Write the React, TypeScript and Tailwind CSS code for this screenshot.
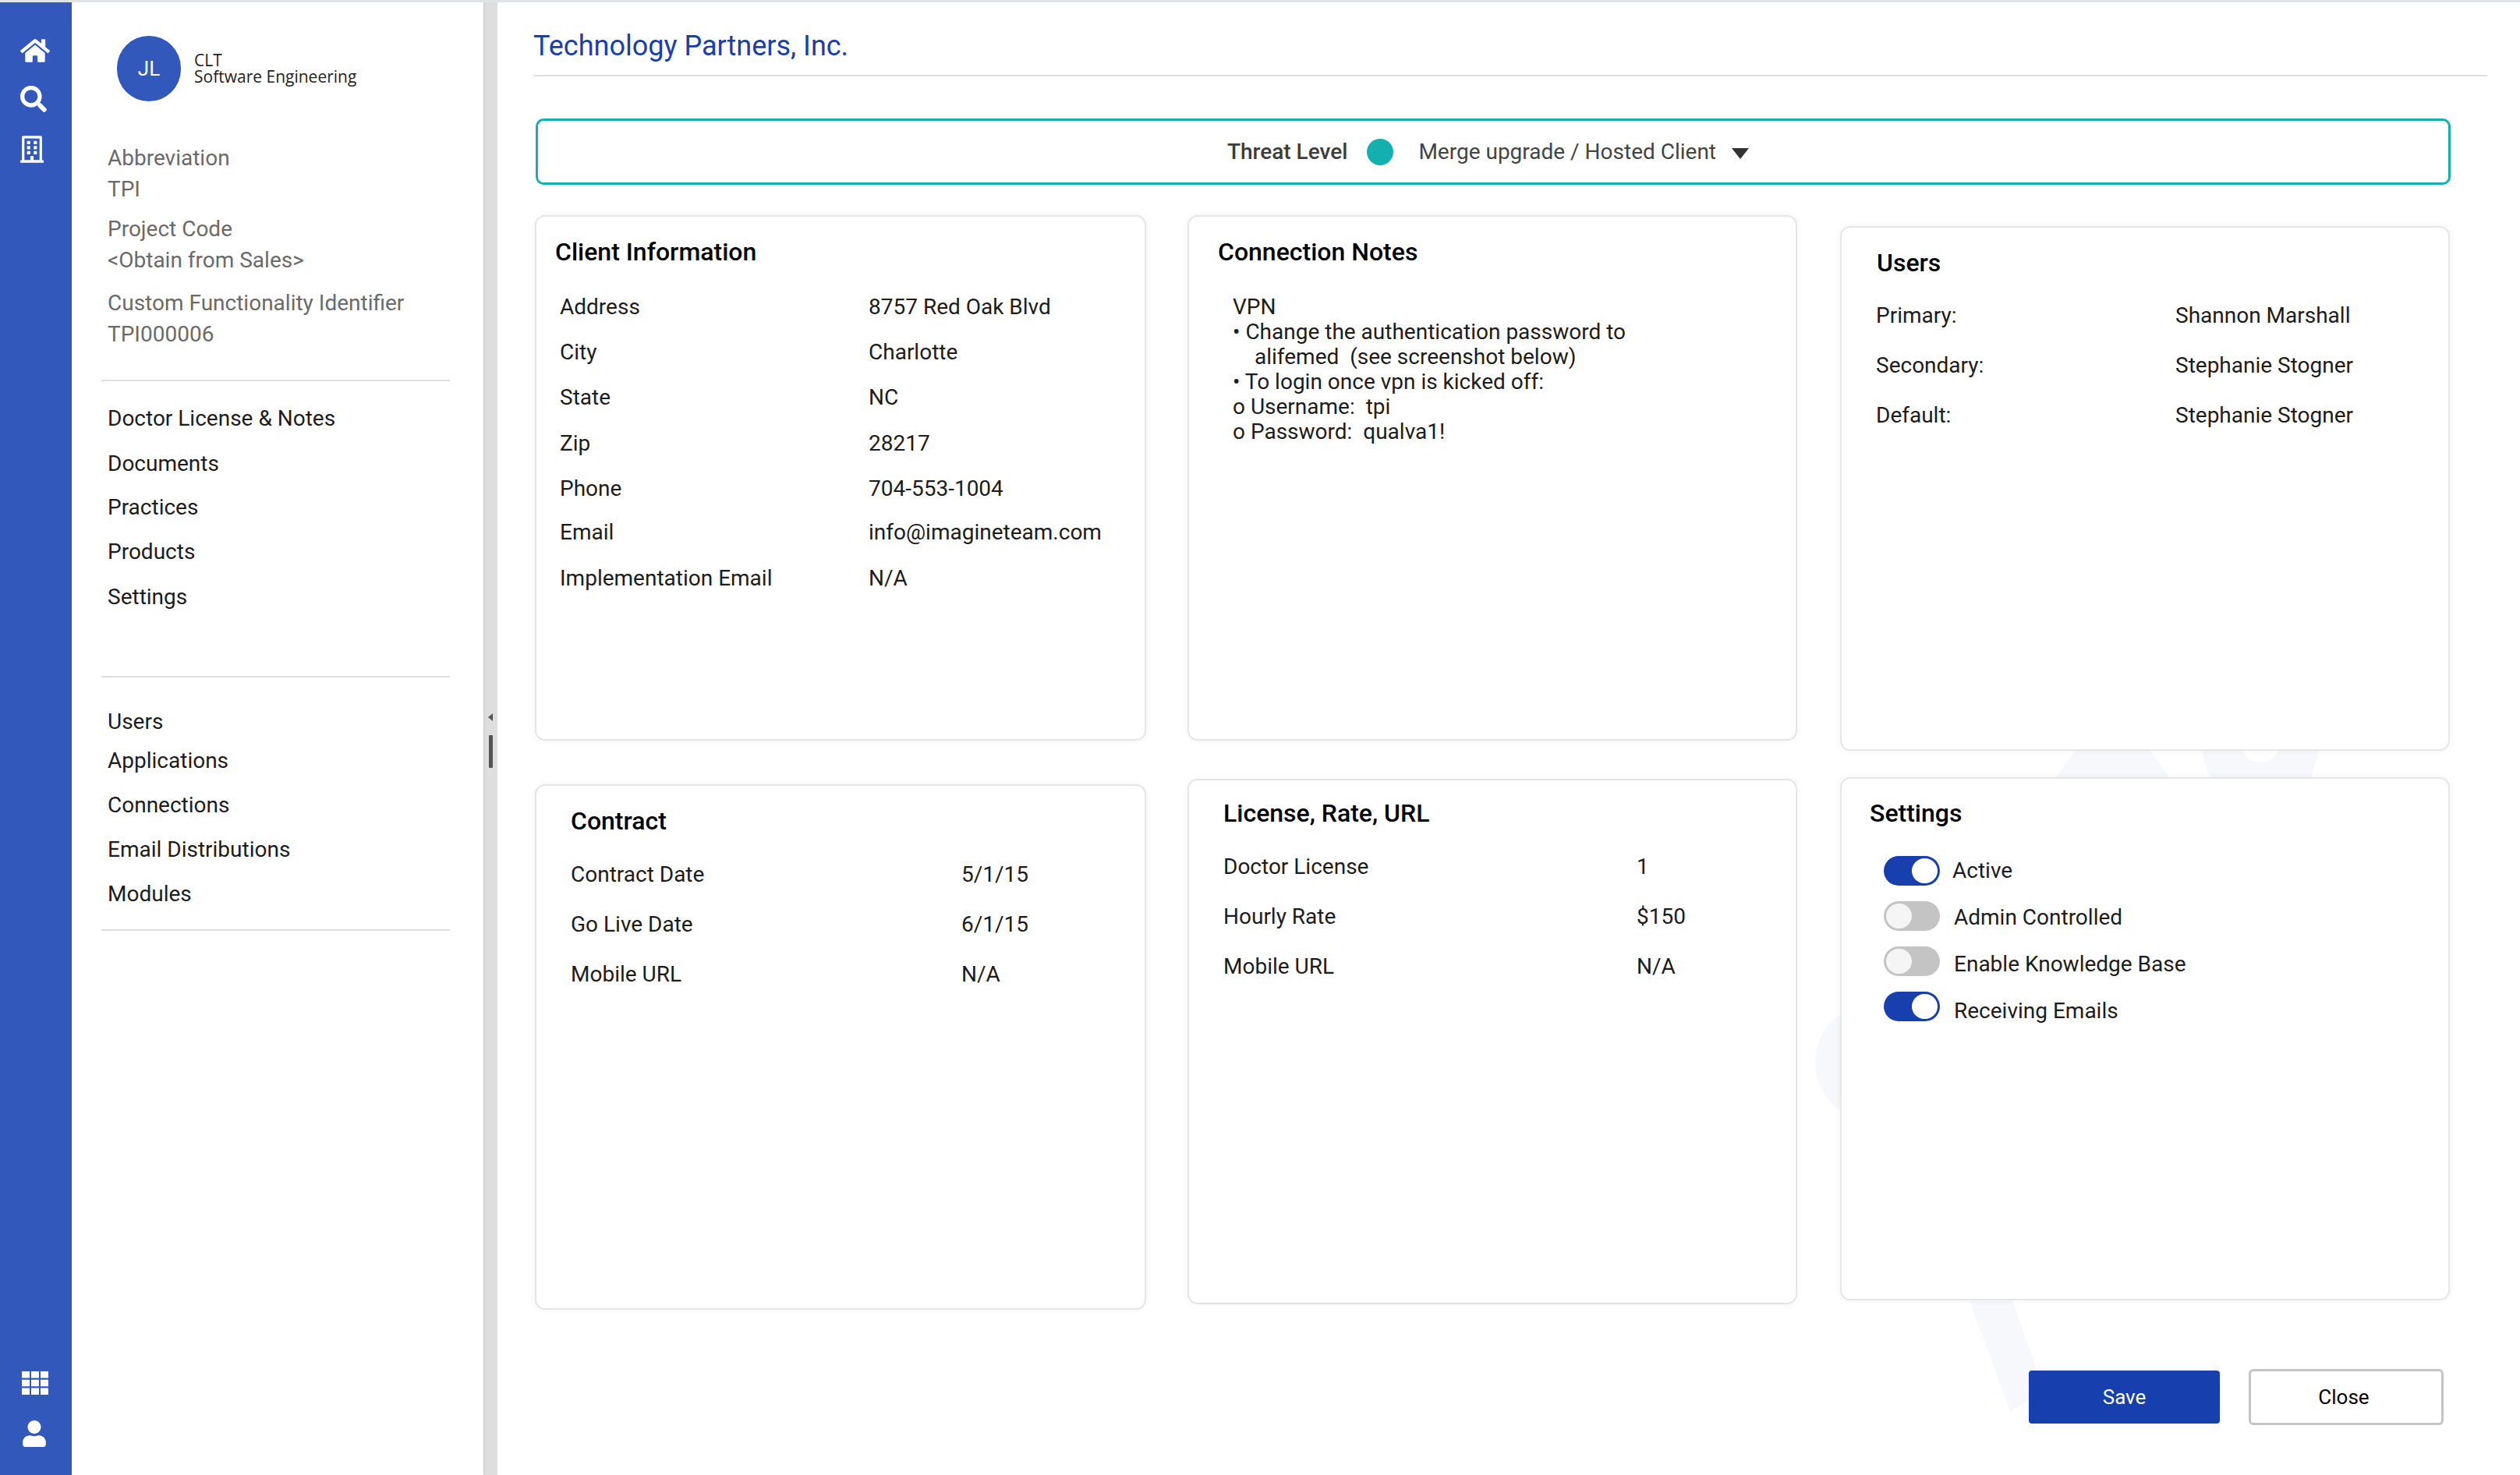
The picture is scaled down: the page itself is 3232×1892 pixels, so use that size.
import { FaHome, FaSearch, FaRegBuilding, FaUser } from 'react-icons/fa';

const font = { fontFamily: 'Roboto, sans-serif' };

function Card({ title, className, titleClass, children }: { title: string; className: string; titleClass: string; children?: React.ReactNode }) {
  return (
    <div className={`bg-white rounded-[13px] border-2 border-[#e6e6e6] shadow-[0_0_8px_rgba(0,0,0,0.06)] ${className}`}>
      <h2 className={`text-[32px] leading-[40px] font-medium text-black ${titleClass}`}>{title}</h2>
      {children}
    </div>
  );
}

function Row({ label, value, labelWidth, rowHeight }: { label: string; value: string; labelWidth: string; rowHeight: string }) {
  return (
    <div className={`flex items-center text-[28px] text-[#1c1c1c] ${rowHeight}`}>
      <span className={labelWidth}>{label}</span>
      <span>{value}</span>
    </div>
  );
}

function Toggle({ on, label, labelClass }: { on: boolean; label: string; labelClass: string }) {
  return (
    <div className="flex items-center h-[58px]">
      <div className={`w-[72px] h-[38px] rounded-full flex items-center px-[3px] ${on ? 'bg-[#1740ae] justify-end' : 'bg-[#c4c4c4] justify-start'}`}>
        <div className={`w-[33px] h-[32px] rounded-full ${on ? 'bg-white' : 'bg-[#f5f5f5]'}`} />
      </div>
      <span className={`text-[28px] text-[#1c1c1c] ${labelClass}`}>{label}</span>
    </div>
  );
}

export default function App() {
  return (
    <div style={font} className="flex w-[3232px] h-[1892px] overflow-hidden bg-white border-t-[3px] border-[#e0e2e6]">
      {/* icon rail */}
      <div className="w-[92px] shrink-0 bg-[#3358bb] text-white flex flex-col items-center justify-between pr-[3px] pt-[45px] pb-[36px]">
        <div className="flex flex-col items-center">
          <FaHome className="w-[38px] h-[34px]" />
          <FaSearch className="w-[34px] h-[34px] mt-[28px] -ml-[4px]" />
          <FaRegBuilding className="w-[30px] h-[35px] mt-[30px] -ml-[7px]" />
        </div>
        <div className="flex flex-col items-center">
          <svg width="34" height="30" viewBox="0 0 34 30" fill="currentColor">
            <rect x="0" y="0" width="10" height="8.5" />
            <rect x="12" y="0" width="10" height="8.5" />
            <rect x="24" y="0" width="10" height="8.5" />
            <rect x="0" y="10.75" width="10" height="8.5" />
            <rect x="12" y="10.75" width="10" height="8.5" />
            <rect x="24" y="10.75" width="10" height="8.5" />
            <rect x="0" y="21.5" width="10" height="8.5" />
            <rect x="12" y="21.5" width="10" height="8.5" />
            <rect x="24" y="21.5" width="10" height="8.5" />
          </svg>
          <FaUser className="w-[32px] h-[34px] mt-[33px] -ml-[2px]" />
        </div>
      </div>

      {/* sidebar */}
      <div className="w-[528px] shrink-0 bg-white pl-[38px] pr-[43px] shadow-[1px_0_2px_rgba(0,0,0,0.1)] z-10">
        <div className="flex items-center pl-[20px] pt-[43px]">
          <div className="w-[82px] h-[84px] rounded-full bg-[#3358bb] text-white flex items-center justify-center text-[26px]">JL</div>
          <div className="ml-[17px] text-[21px] leading-[21px] text-[#222] -mt-[1px]" style={{ fontFamily: '"Open Sans", sans-serif' }}>
            <div>CLT</div>
            <div>Software Engineering</div>
          </div>
        </div>
        <div className="text-[28px] leading-[40px] text-[#6a6a6a] pl-[8px] mt-[53px]">
          <div>Abbreviation</div>
          <div>TPI</div>
          <div className="mt-[11px]">Project Code</div>
          <div>&lt;Obtain from Sales&gt;</div>
          <div className="mt-[15px]">Custom Functionality Identifier</div>
          <div>TPI000006</div>
        </div>
        <div className="h-[2px] bg-[#dedede] mt-[38px]" />
        <div className="text-[28px] text-[#1c1c1c] pl-[8px] mt-[19px]">
          <div className="h-[58px] flex items-center">Doctor License &amp; Notes</div>
          <div className="h-[57px] flex items-center">Documents</div>
          <div className="h-[56px] flex items-center">Practices</div>
          <div className="h-[58px] flex items-center">Products</div>
          <div className="h-[57px] flex items-center">Settings</div>
        </div>
        <div className="h-[2px] bg-[#dedede] mt-[73px]" />
        <div className="text-[28px] text-[#1c1c1c] pl-[8px] mt-[28px]">
          <div className="h-[58px] flex items-center">Users</div>
          <div className="h-[42px] flex items-center">Applications</div>
          <div className="h-[58px] flex items-center mt-[7px]">Connections</div>
          <div className="h-[56px] flex items-center">Email Distributions</div>
          <div className="h-[58px] flex items-center">Modules</div>
        </div>
        <div className="h-[2px] bg-[#dedede] mt-[16px]" />
      </div>

      {/* gutter */}
      <div className="w-[18px] shrink-0 bg-[#dedede] flex flex-col items-center">
        <div className="w-0 h-0 mt-[912px] mr-[1px] border-y-[5px] border-y-transparent border-r-[6px] border-r-[#555]" />
        <div className="w-[5px] h-[42px] mt-[18px] bg-[#555] rounded-[1px]" />
      </div>

      {/* main */}
      <div className="relative flex-1 min-w-0">
        {/* faint logo watermark behind the cards */}
        <svg className="absolute inset-0" width="2594" height="1889" viewBox="638 3 2594 1889" fill="#f7f8fc">
          <path d="M2675,950 L2745,950 Q2770,975 2785,1005 L2635,1005 Q2648,975 2675,950 Z" />
          <path d="M2823,950 L2975,950 Q2972,980 2960,1005 L2838,1005 Q2825,980 2823,950 Z" />
          <circle cx="2899" cy="952" r="26" fill="#ffffff" />
          <polygon points="2523,1660 2578,1660 2612,1756 2612,1790 2578,1811" />
          <circle cx="2403" cy="1363" r="75" />
        </svg>

        <div className="relative">
          <div className="ml-[46px] mr-[42px] h-[95px] border-b-2 border-[#dedede] flex items-center">
            <h1 className="text-[36px] text-[#1740ae] mt-[19px]">Technology Partners, Inc.</h1>
          </div>

          <div className="ml-[49px] w-[2456px] h-[85px] mt-[54px] border-[3px] border-[#14b0af] rounded-[10px] flex items-center justify-center pr-[13px]">
            <span className="text-[28px] font-medium text-[#3c3c3c]">Threat Level</span>
            <span className="w-[34px] h-[34px] rounded-full bg-[#14b0af] ml-[25px]" />
            <span className="text-[28px] text-[#444] ml-[32px]">Merge upgrade / Hosted Client</span>
            <span className="w-0 h-0 ml-[20px] mt-[4px] border-x-[11px] border-x-transparent border-t-[14px] border-t-[#333]" />
          </div>

          <div className="flex items-start ml-[48px] mt-[39px]">
            <div className="w-[784px] shrink-0">
              <Card title="Client Information" className="h-[674px]" titleClass="pl-[24px] pt-[25px]">
                <div className="pl-[30px] mt-[22px]">
                  <Row label="Address" value="8757 Red Oak Blvd" labelWidth="w-[396px]" rowHeight="h-[58px]" />
                  <Row label="City" value="Charlotte" labelWidth="w-[396px]" rowHeight="h-[58px]" />
                  <Row label="State" value="NC" labelWidth="w-[396px]" rowHeight="h-[58px]" />
                  <Row label="Zip" value="28217" labelWidth="w-[396px]" rowHeight="h-[59px]" />
                  <Row label="Phone" value="704-553-1004" labelWidth="w-[396px]" rowHeight="h-[58px]" />
                  <Row label="Email" value="info@imagineteam.com" labelWidth="w-[396px]" rowHeight="h-[54px]" />
                  <Row label="Implementation Email" value="N/A" labelWidth="w-[396px]" rowHeight="h-[64px]" />
                </div>
              </Card>
              <Card title="Contract" className="h-[674px] mt-[56px]" titleClass="pl-[44px] pt-[25px]">
                <div className="pl-[44px] mt-[17px]">
                  <Row label="Contract Date" value="5/1/15" labelWidth="w-[501px]" rowHeight="h-[64px]" />
                  <Row label="Go Live Date" value="6/1/15" labelWidth="w-[501px]" rowHeight="h-[64px]" />
                  <Row label="Mobile URL" value="N/A" labelWidth="w-[501px]" rowHeight="h-[64px]" />
                </div>
              </Card>
            </div>

            <div className="w-[782px] shrink-0 ml-[53px]">
              <Card title="Connection Notes" className="h-[674px]" titleClass="pl-[37px] pt-[25px]">
                <div className="pl-[56px] mt-[35px] text-[28px] leading-[32px] text-[#1c1c1c]">
                  <div>VPN</div>
                  <div>• Change the authentication password to</div>
                  <div className="pl-[28px]">alifemed&nbsp; (see screenshot below)</div>
                  <div>• To login once vpn is kicked off:</div>
                  <div>o Username:&nbsp; tpi</div>
                  <div>o Password:&nbsp; qualva1!</div>
                </div>
              </Card>
              <Card title="License, Rate, URL" className="h-[674px] mt-[49px]" titleClass="pl-[44px] pt-[22px]">
                <div className="pl-[44px] mt-[17px]">
                  <Row label="Doctor License" value="1" labelWidth="w-[530px]" rowHeight="h-[64px]" />
                  <Row label="Hourly Rate" value="$150" labelWidth="w-[530px]" rowHeight="h-[64px]" />
                  <Row label="Mobile URL" value="N/A" labelWidth="w-[530px]" rowHeight="h-[64px]" />
                </div>
              </Card>
            </div>

            <div className="w-[782px] shrink-0 ml-[55px] mt-[14px]">
              <Card title="Users" className="h-[673px]" titleClass="pl-[45px] pt-[25px]">
                <div className="pl-[44px] mt-[16px]">
                  <Row label="Primary:" value="Shannon Marshall" labelWidth="w-[384px]" rowHeight="h-[64px]" />
                  <Row label="Secondary:" value="Stephanie Stogner" labelWidth="w-[384px]" rowHeight="h-[64px]" />
                  <Row label="Default:" value="Stephanie Stogner" labelWidth="w-[384px]" rowHeight="h-[64px]" />
                </div>
              </Card>
              <Card title="Settings" className="h-[671px] mt-[34px]" titleClass="pl-[36px] pt-[24px]">
                <div className="pl-[54px] mt-[25px]">
                  <Toggle on label="Active" labelClass="ml-[16px] -mt-[1px]" />
                  <Toggle on={false} label="Admin Controlled" labelClass="ml-[18px] mt-[3px]" />
                  <Toggle on={false} label="Enable Knowledge Base" labelClass="ml-[18px] mt-[7px]" />
                  <Toggle on label="Receiving Emails" labelClass="ml-[18px] mt-[11px]" />
                </div>
              </Card>
            </div>
          </div>

          <div className="flex justify-end items-center gap-[37px] mr-[98px] mt-[76px]">
            <button className="w-[245px] h-[68px] rounded-[4px] bg-[#1740ae] text-white text-[26px]">Save</button>
            <button className="w-[250px] h-[72px] rounded-[6px] border-[3px] border-[#c4c4c4] bg-white text-black text-[26px] pr-[6px]">Close</button>
          </div>
        </div>
      </div>
    </div>
  );
}
